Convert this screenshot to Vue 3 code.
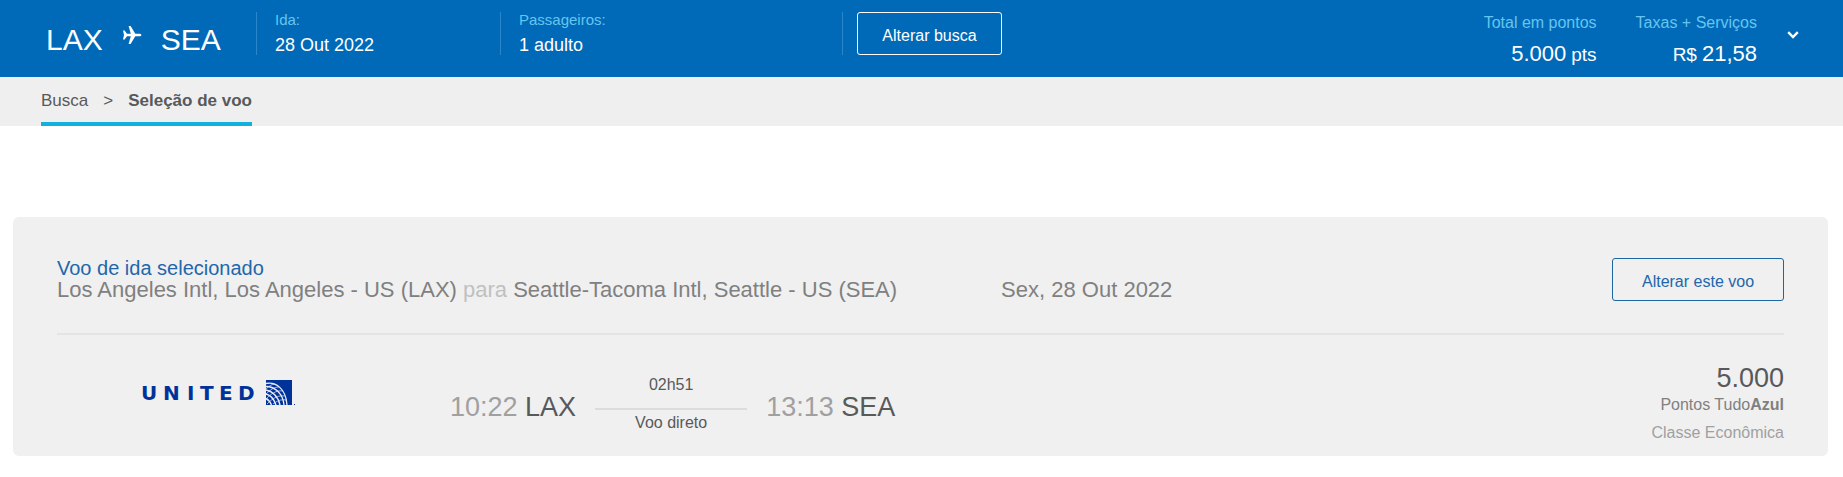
<script setup>
const origin = { code: 'LAX', name: 'Los Angeles Intl, Los Angeles - US (LAX)', time: '10:22' }
const destination = { code: 'SEA', name: 'Seattle-Tacoma Intl, Seattle - US (SEA)', time: '13:13' }
const details = [
  { label: 'Ida:', value: '28 Out 2022', wide: false },
  { label: 'Passageiros:', value: '1 adulto', wide: true },
]
const totals = [
  { label: 'Total em pontos', unitBefore: '', amount: '5.000', unitAfter: 'pts' },
  { label: 'Taxas + Serviços', unitBefore: 'R$', amount: '21,58', unitAfter: '' },
]
</script>

<template>
  <div class="page">
    <header class="topbar">
      <div class="route">
        <span>{{ origin.code }}</span>
        <svg class="plane" viewBox="0 0 20 20" width="20" height="20" aria-hidden="true">
          <path d="M1 5.500h1.600L5 8.700h3.800L6.600 1h2l4.700 7.700h4.200c1 0 1.900.6 1.900 1.300s-.9 1.300-1.900 1.300h-4.200L8.600 19h-2l2.200-7.700H5l-2.400 3.200H1L2 10z" fill="currentColor" />
        </svg>
        <span>{{ destination.code }}</span>
      </div>
      <dl v-for="d in details" :key="d.label" class="detail" :class="{ wide: d.wide }">
        <dt>{{ d.label }}</dt>
        <dd>{{ d.value }}</dd>
      </dl>
      <div class="search">
        <button type="button" class="btn btn-light">Alterar busca</button>
      </div>
      <dl v-for="t in totals" :key="t.label" class="total">
        <dt>{{ t.label }}</dt>
        <dd>
          <small v-if="t.unitBefore">{{ t.unitBefore }}</small>
          <span>{{ t.amount }}</span>
          <small v-if="t.unitAfter">{{ t.unitAfter }}</small>
        </dd>
      </dl>
      <button type="button" class="toggle" aria-label="Detalhes">
        <svg viewBox="0 0 12 8" width="12" height="8" aria-hidden="true">
          <path d="M1.200 1.200 6 6l4.800-4.800" fill="none" stroke="currentColor" stroke-width="2.4" />
        </svg>
      </button>
    </header>

    <nav class="crumbs">
      <div class="trail">
        <a href="#">Busca</a>
        <span>&gt;</span>
        <strong>Seleção de voo</strong>
      </div>
    </nav>

    <main>
      <section class="card">
        <div class="card-head">
          <div class="flight">
            <h2>Voo de ida selecionado</h2>
            <p>{{ origin.name }} <span class="to">para</span> {{ destination.name }}</p>
          </div>
          <p class="date">Sex, 28 Out 2022</p>
          <button type="button" class="btn btn-blue">Alterar este voo</button>
        </div>
        <div class="card-body">
          <svg class="logo" viewBox="-4 0 156 26" width="156" height="26" role="img" aria-label="United">
            <text x="-2 20 44 57 76 95" y="20" class="wordmark">UNITED</text>
            <path d="M123 0h26v25h-26z" fill="#003399" />
            <g fill="none" stroke="#e9eefa">
              <path stroke-width="1.3" d="M123 3.500C132 1.500 143 8 144 25" />
              <path stroke-width="1.3" d="M123 6.500c9 0 17 7 18 18.500" />
              <path stroke-width="1.4" d="M123 10c6 1 12 6 14 15" />
              <path stroke-width="1.4" d="M123 14c4 1 8 5 10 11" />
              <path stroke-width="1.4" d="M123 18.500c2 1 4 3 5.500 6.500" />
              <path stroke-width=".7" d="M123 9c3-3 6-5 9-5" />
              <path stroke-width=".7" d="M123 14c4-4 8-7 13-7" />
              <path stroke-width=".7" d="M123 19c5-5 10-9 17-8" />
              <path stroke-width=".7" d="M124 24c6-6 11-9 18-8" />
              <path stroke-width=".7" d="M130 24c4-3 8-5 13-4" />
            </g>
            <path d="M151 24h1v1h-1z" fill="#003399" />
          </svg>
          <div class="times">
            <span class="stop"><time>{{ origin.time }}</time> {{ origin.code }}</span>
            <div class="leg">
              <span>02h51</span>
              <span class="direct">Voo direto</span>
            </div>
            <span class="stop"><time>{{ destination.time }}</time> {{ destination.code }}</span>
          </div>
          <div class="price">
            <p class="points">5.000</p>
            <p class="program">Pontos Tudo<b>Azul</b></p>
            <p class="cabin">Classe Econômica</p>
          </div>
        </div>
      </section>
    </main>
  </div>
</template>

<style>
body {
  background: #fff;
}
</style>

<style scoped>
.page {
  font-family: "Liberation Sans", Arial, sans-serif;
  color: #58595b;
}
p, h2, dl, dd {
  margin: 0;
}
.topbar {
  display: flex;
  align-items: flex-start;
  box-sizing: border-box;
  min-height: 77px;
  padding: 12px 44px 0 46px;
  background: #006ab8;
  color: #fff;
  white-space: nowrap;
}
.route {
  display: flex;
  flex: none;
  box-sizing: border-box;
  width: 210px;
  gap: 19px;
  font-size: 30px;
  line-height: 56px;
}
.plane {
  margin-top: 13px;
}
.detail {
  flex: none;
  box-sizing: border-box;
  width: 244px;
  height: 43px;
  padding-left: 18px;
  border-left: 1px solid #2a86ca;
}
.detail.wide {
  width: 342px;
}
.detail dt {
  font-size: 15px;
  line-height: 16px;
  color: #66c5ef;
}
.detail dd {
  font-size: 18px;
  line-height: 34px;
}
.search {
  flex: 1;
  padding-left: 14px;
  border-left: 1px solid #2a86ca;
}
.btn {
  height: 43px;
  padding: 4px 0 0;
  border: 1px solid;
  border-radius: 3px;
  background: transparent;
  font-family: inherit;
  font-size: 16px;
  cursor: pointer;
}
.btn-light {
  width: 145px;
  border-color: #fff;
  color: #fff;
}
.total {
  margin-left: 39px;
  text-align: right;
}
.total dt {
  font-size: 16px;
  line-height: 22px;
  color: #66c5ef;
}
.total dd {
  display: flex;
  align-items: baseline;
  justify-content: flex-end;
  gap: 5px;
  font-size: 22px;
  line-height: 40px;
}
.total small {
  font-size: 19px;
}
.toggle {
  display: flex;
  margin-left: 30px;
  padding: 19px 0 8px;
  border: 0;
  background: transparent;
  color: #fff;
  cursor: pointer;
}
.crumbs {
  display: flex;
  padding-left: 41px;
  background: #efefef;
}
.trail {
  display: flex;
  gap: 15px;
  padding-top: 2px;
  border-bottom: 4px solid #12b0dc;
  font-size: 17px;
  line-height: 43px;
}
.trail a {
  color: inherit;
  text-decoration: none;
}
main {
  padding: 91px 15px 21px 13px;
}
.card {
  padding: 41px 44px 11px;
  border-radius: 6px;
  background: #f0f0f0;
}
.card-head {
  display: flex;
  align-items: flex-start;
  padding-bottom: 31px;
  border-bottom: 2px solid #e4e4e4;
}
.flight h2 {
  font-size: 20px;
  font-weight: 400;
  line-height: 20px;
  color: #2266ac;
}
.flight p, .date {
  font-size: 22px;
  line-height: 24px;
  color: #808080;
}
.flight .to {
  color: #c0c0c0;
}
.date {
  flex: 1;
  padding: 20px 0 0 104px;
}
.btn-blue {
  width: 172px;
  border-color: #1d659f;
  color: #2266ac;
}
.card-body {
  display: flex;
  align-items: flex-start;
  padding: 28px 0 0 82px;
}
.logo {
  flex: none;
  margin-top: 17px;
}
.wordmark {
  font-family: "DejaVu Sans", sans-serif;
  font-size: 20px;
  font-weight: 700;
  fill: #003399;
}
.times {
  display: flex;
  flex: 1;
  gap: 19px;
  padding: 12px 0 0 155px;
}
.stop {
  margin-top: 16px;
  font-size: 27px;
  line-height: 32px;
}
.stop time {
  color: #a0a0a0;
}
.leg {
  width: 152px;
  text-align: center;
  font-size: 16px;
  line-height: 20px;
}
.leg span {
  display: block;
}
.leg .direct {
  margin-top: 13px;
  padding-top: 3px;
  border-top: 2px solid #dcdcdc;
}
.price {
  text-align: right;
}
.points {
  font-size: 27px;
  line-height: 30px;
}
.program {
  font-size: 16px;
  line-height: 24px;
  color: #808080;
}
.cabin {
  margin-top: 4px;
  font-size: 16px;
  line-height: 24px;
  color: #a0a0a0;
}
</style>
